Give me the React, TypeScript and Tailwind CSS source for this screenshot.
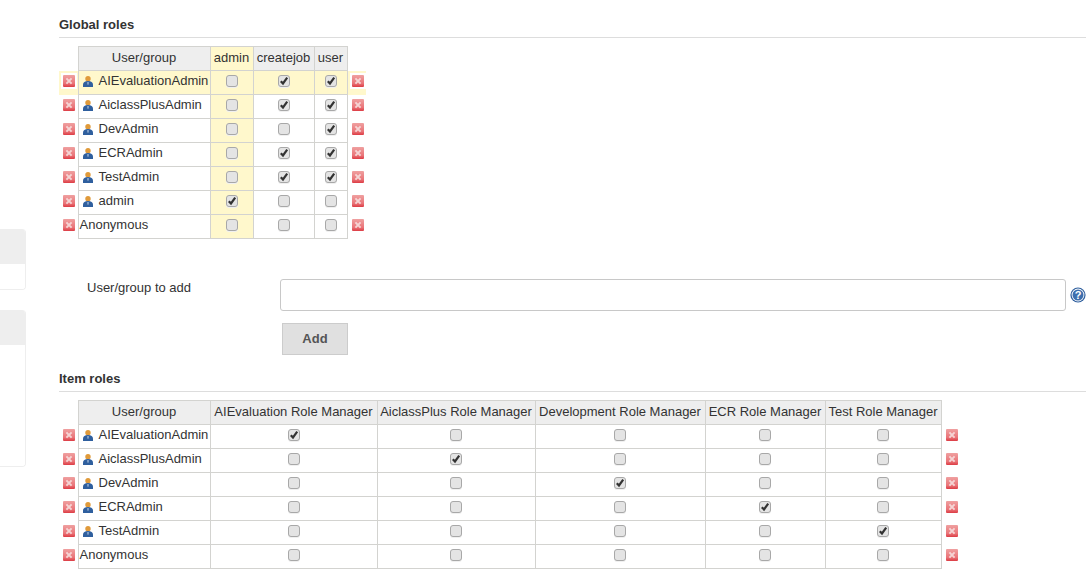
import React from "react";

type Row = { name: string; user: boolean; checks: boolean[] };

const globalRows: Row[] = [
    { name: "AIEvaluationAdmin", user: true, checks: [false, true, true] },
    { name: "AiclassPlusAdmin", user: true, checks: [false, true, true] },
    { name: "DevAdmin", user: true, checks: [false, false, true] },
    { name: "ECRAdmin", user: true, checks: [false, true, true] },
    { name: "TestAdmin", user: true, checks: [false, true, true] },
    { name: "admin", user: true, checks: [true, false, false] },
    { name: "Anonymous", user: false, checks: [false, false, false] },
];

const itemRows: Row[] = [
    { name: "AIEvaluationAdmin", user: true, checks: [true, false, false, false, false] },
    { name: "AiclassPlusAdmin", user: true, checks: [false, true, false, false, false] },
    { name: "DevAdmin", user: true, checks: [false, false, true, false, false] },
    { name: "ECRAdmin", user: true, checks: [false, false, false, true, false] },
    { name: "TestAdmin", user: true, checks: [false, false, false, false, true] },
    { name: "Anonymous", user: false, checks: [false, false, false, false, false] },
];

const globalCols = [
    { label: "admin", width: "w-[43px]" },
    { label: "createjob", width: "w-[61px]" },
    { label: "user", width: "w-[33px]" },
];

const itemCols = [
    { label: "AIEvaluation Role Manager", width: "w-[167px]" },
    { label: "AiclassPlus Role Manager", width: "w-[158px]" },
    { label: "Development Role Manager", width: "w-[170px]" },
    { label: "ECR Role Manager", width: "w-[120px]" },
    { label: "Test Role Manager", width: "w-[116px]" },
];

function DeleteIcon() {
    return (
        <svg width="12" height="12" viewBox="0 0 12 12" className="block">
            <defs>
                <linearGradient id="redbox" x1="0" y1="0" x2="0" y2="1">
                    <stop offset="0" stopColor="#efa0a0" />
                    <stop offset="0.7" stopColor="#ea7478" />
                    <stop offset="1" stopColor="#dc3c44" />
                </linearGradient>
            </defs>
            <rect x="0" y="0" width="12" height="12" rx="1" fill="url(#redbox)" />
            <path d="M3.4 3.4l5.2 5.2M8.6 3.4l-5.2 5.2" stroke="#f5d4d4" strokeWidth="2" />
        </svg>
    );
}

function UserIcon() {
    return (
        <svg width="10" height="11" viewBox="0 0 10 11" className="block">
            <circle cx="5" cy="2.8" r="2.7" fill="#e09a3a" />
            <path d="M0 11V8.6C0 6.4 2 5 5 5s5 1.4 5 3.6V11z" fill="#2f5f9e" />
            <path d="M5 6v2.6" stroke="#c8d6e6" strokeWidth="1" />
        </svg>
    );
}

function HelpIcon() {
    return (
        <svg width="16" height="16" viewBox="0 0 16 16" className="block">
            <circle cx="8" cy="8" r="7.6" fill="#2f5f9e" />
            <circle cx="8" cy="8" r="6.4" fill="#fff" />
            <circle cx="8" cy="8" r="5.5" fill="#3d6fae" />
            <text x="8" y="12" textAnchor="middle" fontSize="11" fontWeight="700" fill="#fff" fontFamily="Liberation Sans, sans-serif">
                ?
            </text>
        </svg>
    );
}

function Check({ checked }: { checked: boolean }) {
    return (
        <span className="mx-auto block h-[12px] w-[12px] rounded-[3px] border border-[#a8a8a8] bg-[#e4e4e4] shadow-[0_1px_0_#f0f0f0]">
            {checked && (
                <svg width="10" height="10" viewBox="0 0 10 10" className="block">
                    <path d="M1.8 5.2l2.2 2.3 4.2-5.8" fill="none" stroke="#333" strokeWidth="2.2" />
                </svg>
            )}
        </span>
    );
}

function RoleTable({
    cols,
    rows,
    marked,
    hovered,
}: {
    cols: { label: string; width: string }[];
    rows: Row[];
    marked?: number;
    hovered?: number;
}) {
    return (
        <table className="table-fixed border-collapse text-[13px] leading-[16px] text-[#333]">
            <thead>
                <tr className="h-[24px]">
                    <th className="w-[19px] p-0" />
                    <th className="w-[132px] border border-[#d3d3d0] bg-[#eee] p-0 pb-[1px] text-center font-normal whitespace-nowrap">User/group</th>
                    {cols.map((c, i) => (
                        <th
                            key={c.label}
                            className={`${c.width} border border-[#d3d3d0] p-0 pb-[1px] text-center font-normal whitespace-nowrap ${i === marked ? "bg-[#fff8cc]" : "bg-[#eee]"}`}
                        >
                            {c.label}
                        </th>
                    ))}
                    <th className="w-[19px] p-0" />
                </tr>
            </thead>
            <tbody>
                {rows.map((row, r) => (
                    <tr key={row.name} className={`h-[24px] ${r === hovered ? "bg-[#fff8cc]" : ""}`}>
                        <td className="p-0 pb-[3px]">
                            <span className={`ml-[2px] flex h-[16px] w-[16px] items-center justify-center ${r === hovered ? "bg-white" : ""}`}>
                                <DeleteIcon />
                            </span>
                        </td>
                        <td className="border border-[#d3d3d0] p-0 pb-[3px] pl-[1px] whitespace-nowrap">
                            {row.user ? (
                                <span className="flex items-center">
                                    <span className="mr-[6px] ml-[3px]">
                                        <UserIcon />
                                    </span>
                                    {row.name}
                                </span>
                            ) : (
                                row.name
                            )}
                        </td>
                        {row.checks.map((c, i) => (
                            <td key={i} className={`border border-[#d3d3d0] p-0 pb-[3px] ${i === marked ? "bg-[#fff8cc]" : ""}`}>
                                <Check checked={c} />
                            </td>
                        ))}
                        <td className="p-0 pb-[3px]">
                            <span className={`ml-[2px] flex h-[16px] w-[16px] items-center justify-center ${r === hovered ? "bg-white" : ""}`}>
                                <DeleteIcon />
                            </span>
                        </td>
                    </tr>
                ))}
            </tbody>
        </table>
    );
}

function SideCard({ bodyHeight }: { bodyHeight: string }) {
    return (
        <div className="w-[26px] overflow-hidden rounded-r-[4px] border-r border-b border-[#eee]">
            <div className="h-[35px] bg-[#eee]" />
            <div className={`${bodyHeight} bg-white`} />
        </div>
    );
}

export default function App() {
    return (
        <div className="flex h-[585px] w-[1090px] overflow-hidden bg-white font-['Liberation_Sans',Arial,sans-serif] text-[#333]">
            <aside className="flex w-[59px] shrink-0 flex-col gap-[20px] pt-[229px]">
                <SideCard bodyHeight="h-[25px]" />
                <SideCard bodyHeight="h-[121px]" />
            </aside>

            <main className="w-[1027px] pt-[17px]">
                <h2 className="border-b border-[#ddd] pb-[4px] text-[13px] leading-[16px] font-bold">Global roles</h2>
                <div className="mt-[8px]">
                    <RoleTable cols={globalCols} rows={globalRows} marked={0} hovered={0} />
                </div>

                <div className="mt-[40px] flex">
                    <label className="w-[221px] pt-[1px] pl-[28px] text-[13px] leading-[16px]">User/group to add</label>
                    <input
                        type="text"
                        className="h-[32px] w-[786px] rounded-[3px] border border-[#c8c8c8] bg-white"
                    />
                    <span className="mt-[8px] ml-[4px]">
                        <HelpIcon />
                    </span>
                </div>
                <button className="mt-[12px] ml-[223px] h-[32px] w-[66px] border border-[#ccc] bg-[#e0e0e0] text-[13px] font-bold text-[#555]">
                    Add
                </button>

                <h2 className="mt-[16px] border-b border-[#ddd] pb-[4px] text-[13px] leading-[16px] font-bold">Item roles</h2>
                <div className="mt-[8px]">
                    <RoleTable cols={itemCols} rows={itemRows} />
                </div>
            </main>
        </div>
    );
}
